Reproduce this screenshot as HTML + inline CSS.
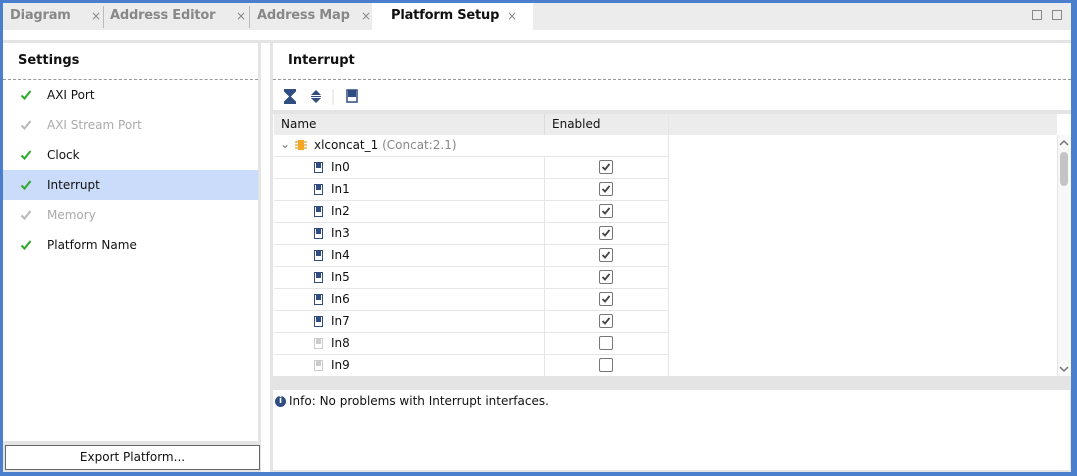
<!DOCTYPE html><html><head><style>
body{margin:0;width:1077px;height:476px;overflow:hidden;font-family:"DejaVu Sans","Liberation Sans",sans-serif;font-size:12px;color:#111;position:relative;background:#4a7fce}
.a{position:absolute}
.frame{left:3px;top:3px;width:1068px;height:469px;background:#fff}
.tabs{left:3px;top:3px;width:1068px;height:27px;background:#ececec}
.tab{top:3px;height:27px;line-height:26px;font-weight:bold;color:#888;font-size:13px;letter-spacing:-0.2px}
.x{color:#888;font-size:12px;font-weight:normal}
.gb{background:#e4e4e4}
.row{position:absolute;left:274px;width:395px;height:21px;border-bottom:1px solid #e6e6e6}
.row span.n{position:absolute;left:57px;top:3px}
.row .pi{position:absolute;left:40px;top:5px;width:7px;height:9px;border:1px solid #2f4d80;background:#fff}
.row .pi:after{content:"";position:absolute;left:1px;top:0;width:5px;height:5px;background:#2f4d80}
.row .cb{position:absolute;left:325px;top:3px;width:12px;height:12px;border:1px solid #777;border-radius:2px}
.row .sep{position:absolute;left:270px;top:0;width:1px;height:22px;background:#e6e6e6}
.dis .pi{border-color:#ccc}.dis .pi:after{background:#ccc}
.set{position:absolute;left:3px;width:255px;height:30px;line-height:30px}
.set svg{position:absolute;left:17px;top:9px}
.set span{position:absolute;left:44px}
.g span{color:#aaa}
</style></head><body>
<svg width="0" height="0" style="position:absolute"><defs>
<symbol id="ck" viewBox="0 0 12 12"><path d="M1.5 6.5l3 3 6-7.5" fill="none" stroke-width="2.2"/></symbol>
<symbol id="cb" viewBox="0 0 12 12"><path d="M2.5 6l2.5 2.5 4.5-5.5" fill="none" stroke="#444" stroke-width="1.8"/></symbol>
</defs></svg>
<div class="a frame"></div>
<div class="a tabs"></div>
<div class="a tab" style="left:10px">Diagram</div><div class="a tab x" style="left:91px">×</div>
<div class="a" style="left:103px;top:6px;width:1px;height:22px;background:#bbb"></div>
<div class="a tab" style="left:110px">Address Editor</div><div class="a tab x" style="left:236px">×</div>
<div class="a" style="left:249px;top:6px;width:1px;height:22px;background:#bbb"></div>
<div class="a tab" style="left:257px">Address Map</div><div class="a tab x" style="left:361px">×</div>
<div class="a" style="left:372px;top:3px;width:161px;height:27px;background:#fff"></div>
<div class="a tab" style="left:391px;color:#111">Platform Setup</div><div class="a tab x" style="left:507px">×</div>
<div class="a" style="left:1032px;top:10px;width:8px;height:8px;border:1px solid #888"></div>
<div class="a" style="left:1052px;top:10px;width:8px;height:8px;border:1px solid #888"></div>
<div class="a gb" style="left:3px;top:40px;width:1068px;height:432px"></div>
<div class="a" style="left:261px;top:43px;width:9px;height:429px;background:#fff"></div>
<div class="a" style="left:3px;top:43px;width:255px;height:398px;background:#fff"></div>
<div class="a" style="left:18px;top:53px;font-weight:bold;font-size:13px">Settings</div>
<div class="a" style="left:3px;top:79px;width:255px;border-top:1px dashed #999"></div>
<div class="set" style="top:80px"><svg width="12" height="12" stroke="#3a3"><use href="#ck"/></svg><span>AXI Port</span></div>
<div class="set g" style="top:110px"><svg width="12" height="12" stroke="#bbb"><use href="#ck"/></svg><span>AXI Stream Port</span></div>
<div class="set" style="top:140px"><svg width="12" height="12" stroke="#3a3"><use href="#ck"/></svg><span>Clock</span></div>
<div class="set" style="top:170px;background:#cadcfa"><svg width="12" height="12" stroke="#3a3"><use href="#ck"/></svg><span>Interrupt</span></div>
<div class="set g" style="top:200px"><svg width="12" height="12" stroke="#bbb"><use href="#ck"/></svg><span>Memory</span></div>
<div class="set" style="top:230px"><svg width="12" height="12" stroke="#3a3"><use href="#ck"/></svg><span>Platform Name</span></div>
<div class="a" style="left:5px;top:445px;width:253px;height:23px;border:1px solid #666;background:#fff;text-align:center;line-height:23px">Export Platform...</div>
<div class="a" style="left:273px;top:43px;width:798px;height:333px;background:#fff"></div>
<div class="a" style="left:288px;top:53px;font-weight:bold;font-size:13px">Interrupt</div>
<div class="a" style="left:273px;top:79px;width:798px;border-top:1px dashed #999"></div>
<svg class="a" style="left:282px;top:88px" width="80" height="18">
<path d="M2 2h12M2 15h12M4 4l4 4 4-4zM4 13l4-4 4 4z" stroke="#2f4d80" stroke-width="2" fill="#2f4d80"/>
<path d="M29 7l5-5 5 5zM29 10l5 5 5-5z" fill="#2f4d80"/><rect x="29" y="8" width="10" height="1" fill="#2f4d80"/>
<line x1="51" y1="1" x2="51" y2="17" stroke="#ddd"/>
<rect x="65" y="2" width="10" height="12" fill="#fff" stroke="#2f4d80" stroke-width="1.5"/><rect x="66" y="2" width="8" height="7" fill="#2f4d80"/>
</svg>
<div class="a" style="left:273px;top:110px;width:798px;height:4px;background:#e4e4e4"></div>
<div class="a" style="left:274px;top:114px;width:783px;height:21px;background:#ececec"></div>
<div class="a" style="left:544px;top:114px;width:1px;height:21px;background:#ddd"></div>
<div class="a" style="left:668px;top:114px;width:1px;height:262px;background:#e6e6e6"></div>
<div class="a" style="left:281px;top:117px">Name</div>
<div class="a" style="left:552px;top:117px">Enabled</div>
<div class="row" style="top:135px;width:395px"><span style="position:absolute;left:6px;top:2px;color:#777">⌄</span>
<svg style="position:absolute;left:21px;top:4px" width="12" height="12"><path d="M0 3h3M0 6h3M0 9h3M9 3h3M9 6h3M9 9h3" stroke="#c80"/><rect x="3" y="1" width="6" height="10" fill="#f5a623"/></svg>
<span class="n" style="left:40px">xlconcat_1 <span style="color:#888">(Concat:2.1)</span></span></div>
<div class="row" style="top:157px"><i class="pi"></i><span class="n">In0</span><i class="sep"></i><svg class="cb" viewBox="0 0 12 12"><use href="#cb"/></svg></div>
<div class="row" style="top:179px"><i class="pi"></i><span class="n">In1</span><i class="sep"></i><svg class="cb" viewBox="0 0 12 12"><use href="#cb"/></svg></div>
<div class="row" style="top:201px"><i class="pi"></i><span class="n">In2</span><i class="sep"></i><svg class="cb" viewBox="0 0 12 12"><use href="#cb"/></svg></div>
<div class="row" style="top:223px"><i class="pi"></i><span class="n">In3</span><i class="sep"></i><svg class="cb" viewBox="0 0 12 12"><use href="#cb"/></svg></div>
<div class="row" style="top:245px"><i class="pi"></i><span class="n">In4</span><i class="sep"></i><svg class="cb" viewBox="0 0 12 12"><use href="#cb"/></svg></div>
<div class="row" style="top:267px"><i class="pi"></i><span class="n">In5</span><i class="sep"></i><svg class="cb" viewBox="0 0 12 12"><use href="#cb"/></svg></div>
<div class="row" style="top:289px"><i class="pi"></i><span class="n">In6</span><i class="sep"></i><svg class="cb" viewBox="0 0 12 12"><use href="#cb"/></svg></div>
<div class="row" style="top:311px"><i class="pi"></i><span class="n">In7</span><i class="sep"></i><svg class="cb" viewBox="0 0 12 12"><use href="#cb"/></svg></div>
<div class="row dis" style="top:333px"><i class="pi"></i><span class="n">In8</span><i class="sep"></i><i class="cb"></i></div>
<div class="row dis" style="top:355px;border:0"><i class="pi"></i><span class="n">In9</span><i class="sep"></i><i class="cb"></i></div>
<div class="a" style="left:1057px;top:135px;width:13px;height:241px;background:#f8f8f8;border-left:1px solid #e4e4e4"></div>
<svg class="a" style="left:1059px;top:139px" width="10" height="8"><path d="M1 6l4-4 4 4" fill="none" stroke="#777" stroke-width="1.5"/></svg>
<div class="a" style="left:1060px;top:152px;width:8px;height:34px;background:#c4c4c4;border-radius:4px"></div>
<svg class="a" style="left:1059px;top:365px" width="10" height="8"><path d="M1 2l4 4 4-4" fill="none" stroke="#777" stroke-width="1.5"/></svg>
<div class="a" style="left:273px;top:390px;width:797px;height:80px;background:#fff"></div>
<div class="a" style="left:275px;top:396px;width:11px;height:11px;border-radius:50%;background:#2f4d80;color:#fff;font-size:9px;font-weight:bold;text-align:center;line-height:11px">i</div>
<div class="a" style="left:289px;top:394px">Info: No problems with Interrupt interfaces.</div>
</body></html>
